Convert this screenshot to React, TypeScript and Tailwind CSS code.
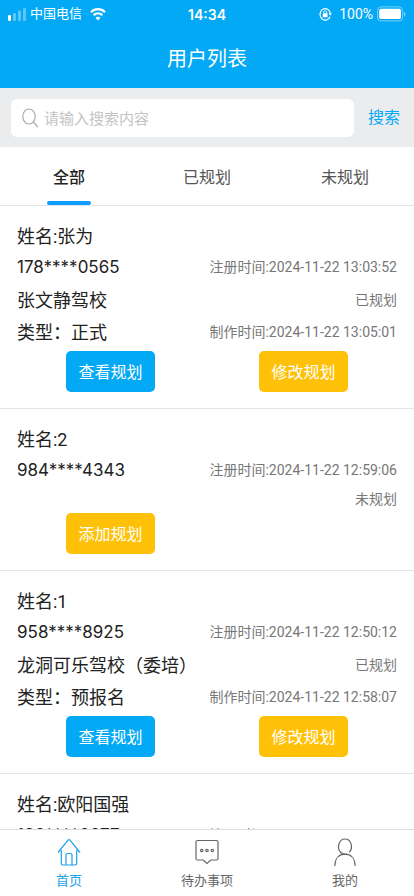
import React, { useState } from 'react';
import clsx from 'clsx';

interface User {
  name: string;
  phone: string;
  school?: string;
  type?: string;
  registeredAt: string;
  madeAt?: string;
}

const TABS = ['全部', '已规划', '未规划'];

const USERS: User[] = [
  {
    name: '张为',
    phone: '178****0565',
    school: '张文静驾校',
    type: '正式',
    registeredAt: '2024-11-22 13:03:52',
    madeAt: '2024-11-22 13:05:01',
  },
  {
    name: '2',
    phone: '984****4343',
    registeredAt: '2024-11-22 12:59:06',
  },
  {
    name: '1',
    phone: '958****8925',
    school: '龙洞可乐驾校（委培）',
    type: '预报名',
    registeredAt: '2024-11-22 12:50:12',
    madeAt: '2024-11-22 12:58:07',
  },
  {
    name: '欧阳国强',
    phone: '186****6677',
    registeredAt: '2024-11-22 12:40:31',
  },
];

const StatusBar = () => (
  <div className="grid grid-cols-3 items-center h-7 px-2 text-[14px]">
    <div className="flex items-center">
      <svg width="18" height="14" viewBox="0 0 18 14" fill="#fff" aria-hidden="true">
        <rect x="0" y="8" width="3" height="6" rx="1" />
        <rect x="5" y="6" width="3" height="8" rx="1" opacity="0.35" />
        <rect x="10" y="3.500" width="3" height="10.500" rx="1" opacity="0.35" />
        <rect x="15" y="1" width="3" height="13" rx="1" opacity="0.35" />
      </svg>
      <span className="ml-1 text-[13px]">中国电信</span>
      <svg className="ml-2" width="16" height="14" viewBox="0 0 16 14" aria-hidden="true">
        <path d="M1 5.200C5 1.200 11 1.200 15 5.200" fill="none" stroke="#fff" strokeWidth="2.200" />
        <path d="M3.600 8.200c2.600-2.500 6.200-2.500 8.800 0" fill="none" stroke="#fff" strokeWidth="2.200" />
        <path d="M8 13.500 5.500 10.700c1.400-1.300 3.600-1.300 5 0z" fill="#fff" />
      </svg>
    </div>
    <span className="text-center font-semibold font-['Inter',sans-serif]">14:34</span>
    <div className="flex items-center justify-end">
      <svg width="13" height="14" viewBox="0 0 13 14" aria-hidden="true">
        <path
          d="M11 9.800A5.200 5.800 0 1 1 11.400 6.500"
          fill="none"
          stroke="#fff"
          strokeWidth="1.200"
        />
        <path d="M9.600 6.300h3.400l-1.700 2.400z" fill="#fff" />
        <rect x="3.800" y="6.300" width="4.800" height="4" rx="0.500" fill="#fff" />
        <path d="M4.800 6.500V5.200c0-2 2.800-2 2.800 0v1.300" fill="none" stroke="#fff" strokeWidth="1" />
      </svg>
      <span className="ml-[7px]">100%</span>
      <svg className="ml-1" width="29" height="16" viewBox="0 0 29 16" aria-hidden="true">
        <rect x="0.600" y="0.900" width="25" height="14" rx="3.500" fill="none" stroke="#fff" strokeOpacity="0.450" />
        <rect x="2.200" y="2.700" width="21.800" height="10.400" rx="1.800" fill="#fff" />
        <path d="M27 5.500c1.800 0.600 1.800 4.400 0 5z" fill="#fff" opacity="0.500" />
      </svg>
    </div>
  </div>
);

const UserCard = ({ user }: { user: User }) => {
  const planned = Boolean(user.madeAt);

  return (
    <li className="border-b border-[#e4e4e4] px-[14px] pt-[15px] pb-4">
      <div className="px-[3px] text-[18px] leading-8 text-[#222]">
        <h2>姓名:{user.name}</h2>
        <div className="flex justify-between leading-7">
          <span className="font-['Inter',sans-serif] text-[17px]">{user.phone}</span>
          <span className="text-[14px] text-[#777]">注册时间:{user.registeredAt}</span>
        </div>
        <div className={clsx('flex justify-between', user.school ? 'mt-1' : 'mt-[3px]')}>
          {user.school && <span>{user.school}</span>}
          <span
            className={clsx(
              'ml-auto text-[14px] text-[#777]',
              user.school ? 'leading-[30px]' : 'leading-6'
            )}
          >
            {planned ? '已规划' : '未规划'}
          </span>
        </div>
        {user.type && (
          <div className="flex justify-between">
            <span>类型：{user.type}</span>
            <span className="text-[14px] leading-[30px] text-[#777]">制作时间:{user.madeAt}</span>
          </div>
        )}
      </div>

      {/* Card actions */}
      <div className="mt-[2px] grid grid-cols-2 justify-items-center text-[16px] text-white">
        {planned ? (
          <>
            <button type="button" className="h-[41px] px-3 pt-[2px] rounded-[5px] bg-[#03a9f5]">查看规划</button>
            <button type="button" className="h-[41px] px-3 pt-[2px] rounded-[5px] bg-[#ffc107]">修改规划</button>
          </>
        ) : (
          <button type="button" className="h-[41px] px-3 pt-[2px] rounded-[5px] bg-[#ffc107]">添加规划</button>
        )}
      </div>
    </li>
  );
};

const HomeIcon = () => (
  <svg width="24" height="28" viewBox="0 0 24 28" fill="none" stroke="currentColor" strokeWidth="1.200" aria-hidden="true">
    <path d="M1 14.500 11 2.200q1-1.200 2 0l10 12.300" />
    <path d="M4.300 12v13.300q0 1.700 1.500 1.700h12.400q1.500 0 1.500-1.700V12" />
    <path d="M9 27V17q0-1.500 1.500-1.500h3Q15 15.500 15 17v10" />
  </svg>
);

const TodoIcon = () => (
  <svg width="24" height="28" viewBox="0 0 24 28" fill="none" stroke="currentColor" strokeWidth="1.200" aria-hidden="true">
    <path d="M2.500 2.500h19q1.500 0 1.500 1.500v16.500q0 1.500-1.500 1.500h-5.800L12 25.500 8.300 22H2.500Q1 22 1 20.500V4q0-1.500 1.500-1.500z" />
    <circle cx="6.700" cy="12.500" r="1.200" />
    <circle cx="12" cy="12.500" r="1.200" />
    <circle cx="17.300" cy="12.500" r="1.200" />
  </svg>
);

const MineIcon = () => (
  <svg width="24" height="28" viewBox="0 0 24 28" fill="none" stroke="currentColor" strokeWidth="1.200" aria-hidden="true">
    <path d="M16.300 14.300C20.300 10 18.500 1 12 1S3.600 10.500 7.800 14.500Q10 16.800 14 16.300" />
    <path d="M1.800 28C2 20.500 6 16.200 12 16.200S22 20.500 22.200 28" />
  </svg>
);

const NAV = [
  { label: '首页', icon: HomeIcon },
  { label: '待办事项', icon: TodoIcon },
  { label: '我的', icon: MineIcon },
];

export default function App() {
  const [tab, setTab] = useState(0);
  const [keyword, setKeyword] = useState('');

  const users = USERS.filter((u) => tab === 0 || (tab === 1) === Boolean(u.madeAt));

  return (
    <div className="flex flex-col h-screen bg-white font-['Roboto','Noto_Sans_CJK_SC',sans-serif]">
      <header className="shrink-0 bg-[#03a9f5] text-white">
        <StatusBar />
        <h1 className="h-15 text-center text-[20px] leading-[62px]">用户列表</h1>
      </header>

      {/* Search */}
      <form
        className="shrink-0 flex items-center h-[59px] pl-[11px] bg-[#ebecee]"
        onSubmit={(e) => e.preventDefault()}
      >
        <label className="flex flex-1 items-center h-[38px] px-[11px] rounded-md bg-white">
          <svg width="17" height="20" viewBox="0 0 17 20" fill="none" stroke="#aaa" strokeWidth="1.200" aria-hidden="true">
            <ellipse cx="7" cy="8.500" rx="6.200" ry="7.500" />
            <path d="m11.300 14 4.700 5" />
          </svg>
          <input
            className="ml-[5px] pt-[3px] flex-1 min-w-0 text-[15px] text-[#333] outline-none placeholder:text-[#c4c4c4]"
            aria-label="搜索"
            placeholder="请输入搜索内容"
            value={keyword}
            onChange={(e) => setKeyword(e.target.value)}
          />
        </label>
        <button type="submit" className="px-[14px] text-[16px] text-[#03a9f5]">搜索</button>
      </form>

      {/* Filter tabs */}
      <div className="shrink-0 grid grid-cols-3 h-[59px] border-b border-[#e4e4e4]" role="tablist">
        {TABS.map((label, i) => (
          <button
            key={label}
            type="button"
            role="tab"
            aria-selected={tab === i}
            onClick={() => setTab(i)}
            className={clsx(
              'flex flex-col items-center pt-2 text-[16px]',
              tab === i ? 'font-medium text-[#222]' : 'text-[#555]'
            )}
          >
            <span className="leading-[46px]">{label}</span>
            <span className={clsx('w-11 h-1 rounded-full', tab === i && 'bg-[#0d9dff]')} />
          </button>
        ))}
      </div>

      <main className="flex-1 min-h-0 overflow-y-auto [scrollbar-width:none]">
        <ul>
          {users.map((user) => (
            <UserCard key={user.phone} user={user} />
          ))}
        </ul>
      </main>

      <nav className="shrink-0 grid grid-cols-3 h-[67px] border-t border-[#ddd] bg-white">
        {NAV.map(({ label, icon: Icon }, i) => (
          <a
            key={label}
            href="#"
            className={clsx(
              'flex flex-col items-center pt-2 text-[13px] leading-[30px]',
              i === 0 ? 'text-[#1ba1e6]' : 'text-[#666]'
            )}
          >
            <Icon />
            {label}
          </a>
        ))}
      </nav>
    </div>
  );
}
